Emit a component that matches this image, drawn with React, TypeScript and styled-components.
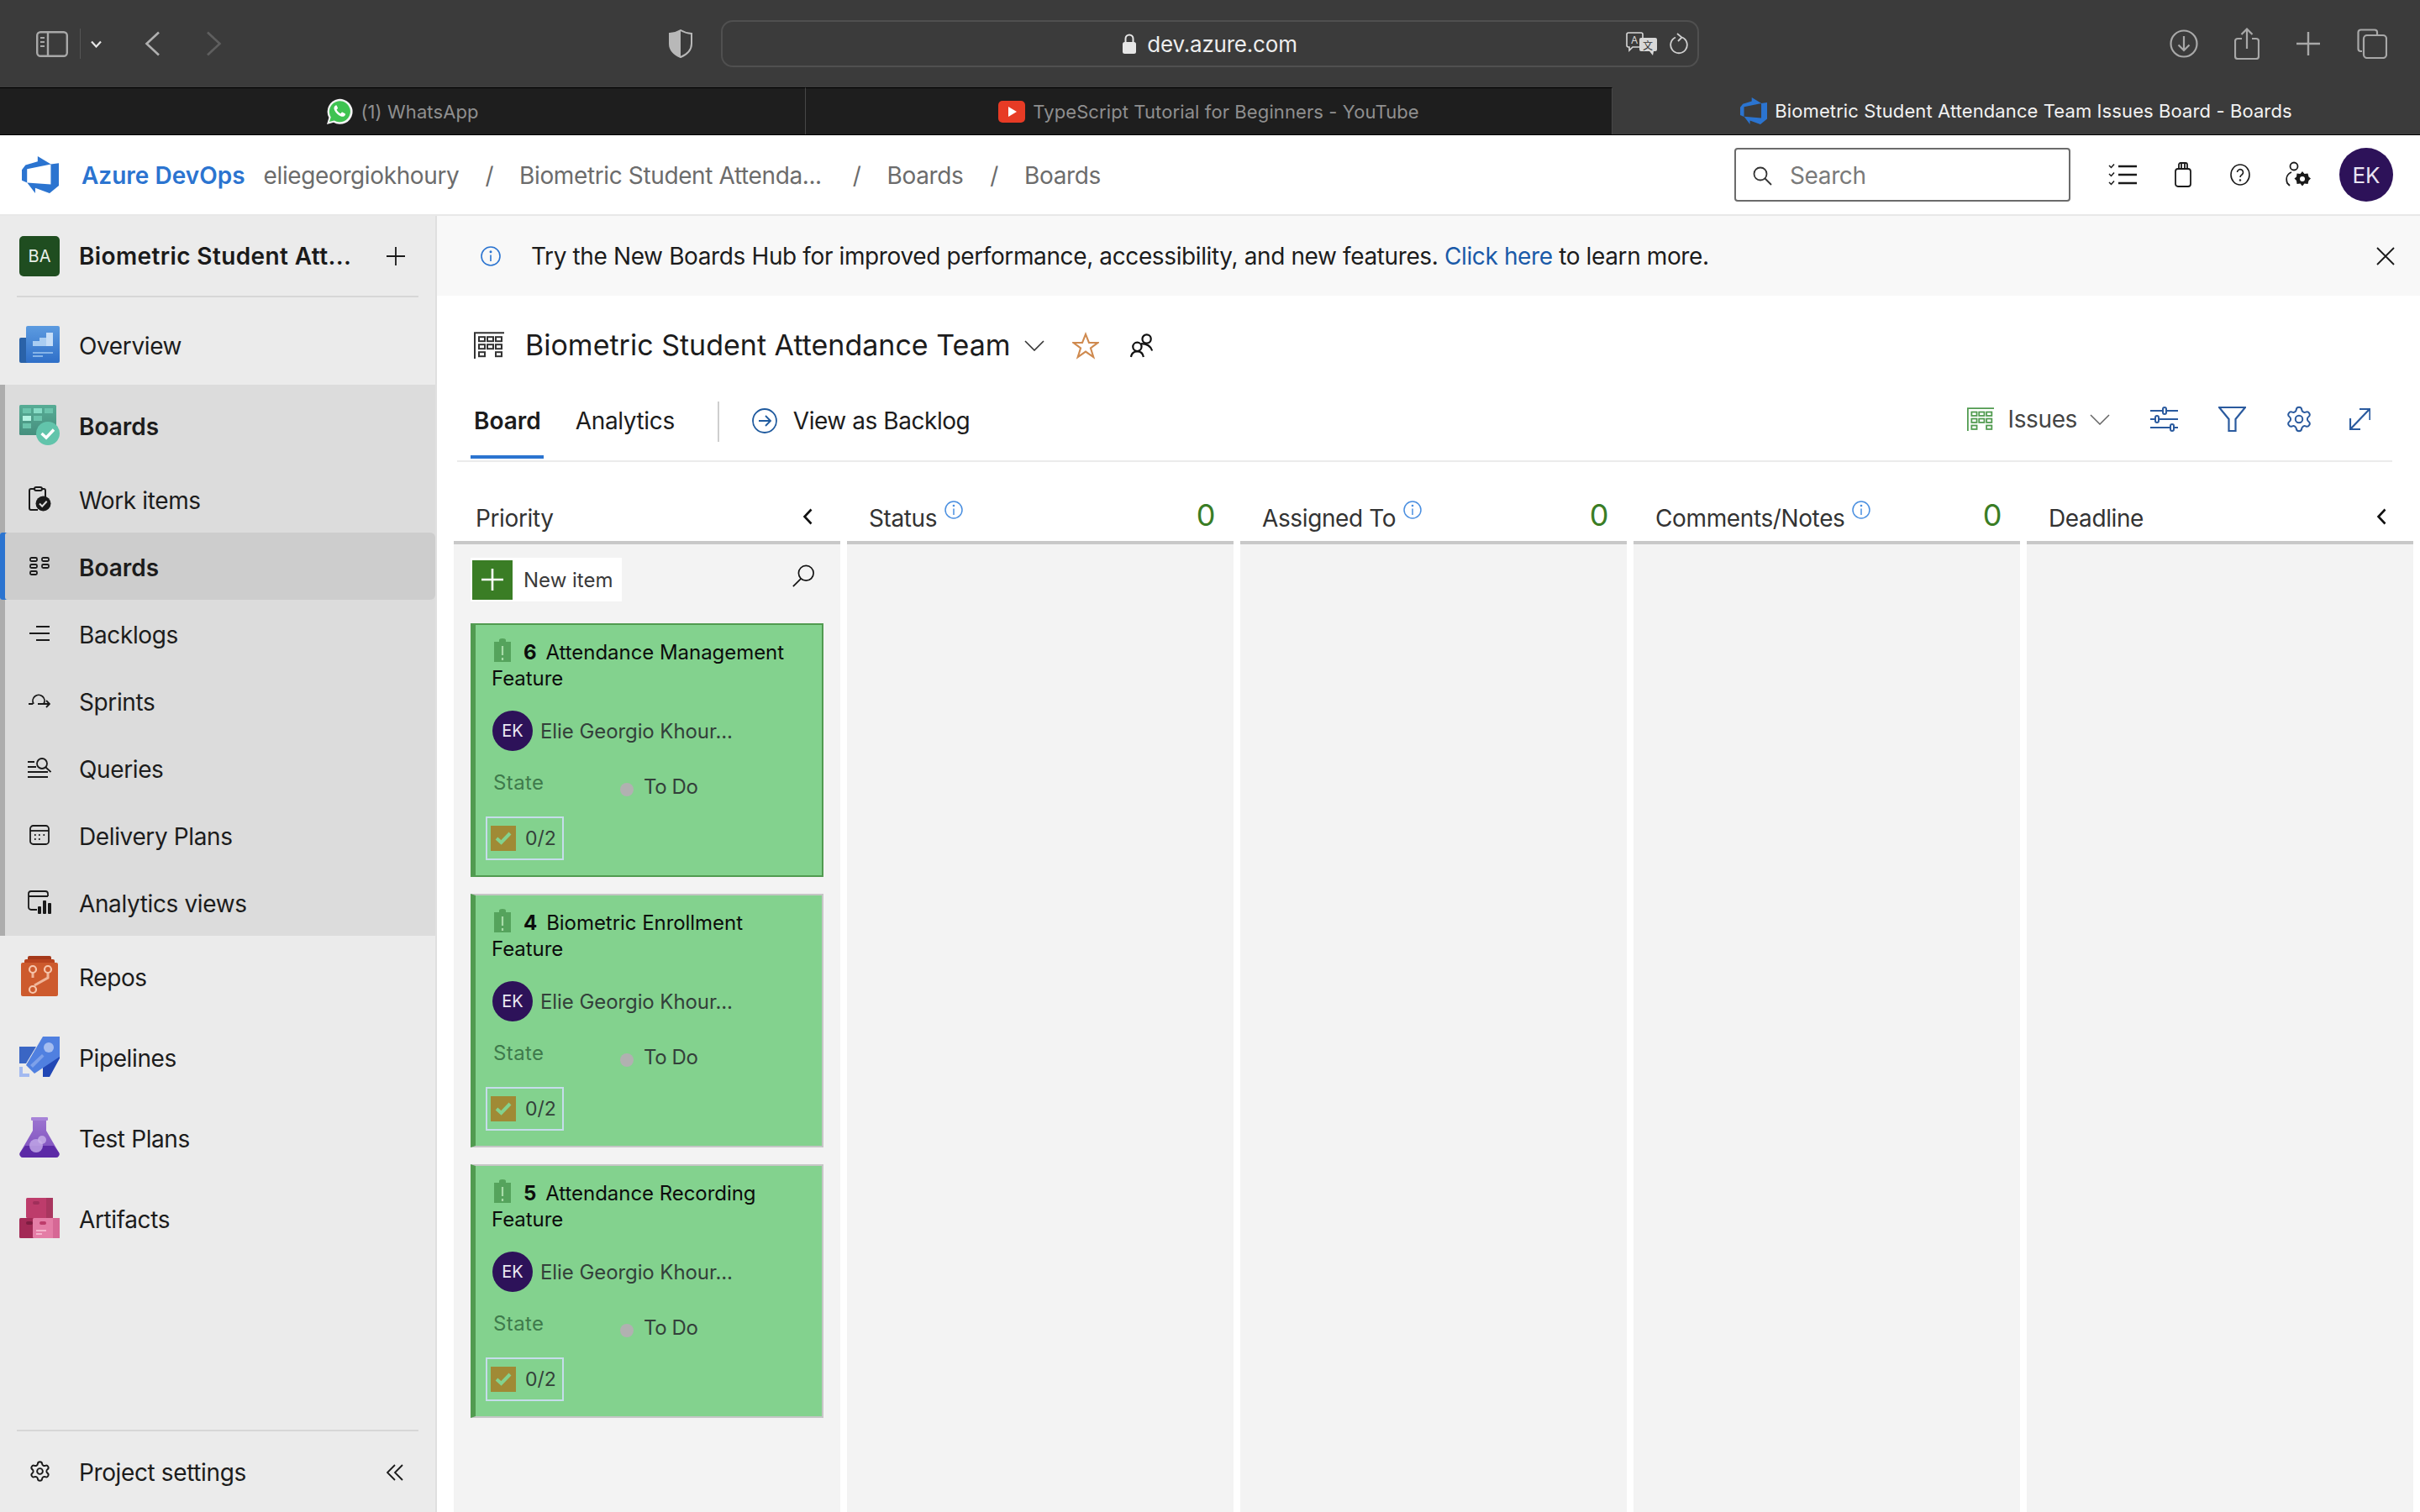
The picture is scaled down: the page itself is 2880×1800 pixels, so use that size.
import React from "react";
import styled, { createGlobalStyle } from "styled-components";
import { Settings } from "lucide-react";

const BLUE = "#2b74d0";
const ICON_BLUE = "#2a5a9e";
const TIGHT = "-0.38px";

const GlobalStyle = createGlobalStyle`
  html, body {
    margin: 0;
    padding: 0;
    background: #fff;
  }
  body {
    font-family: Inter, "Noto Sans", "Liberation Sans", sans-serif;
    color: #1c1c1c;
  }
  * {
    box-sizing: border-box;
  }
`;

const Page = styled.div`
  width: 2880px;
  height: 1800px;
  display: flex;
  flex-direction: column;
  overflow: hidden;
`;

/* ---------- browser chrome ---------- */

const BrowserBar = styled.div`
  height: 104px;
  flex: none;
  background: #3b3b3b;
  display: flex;
  align-items: center;
  padding: 0 39px 0 43px;
`;

const ToolIcon = styled.svg<{ $ml?: number }>`
  flex: none;
  margin-left: ${(p) => p.$ml ?? 0}px;
`;

const ToolDivider = styled.span`
  width: 1px;
  height: 36px;
  flex: none;
  margin-left: 14px;
  background: #555;
`;

const UrlField = styled.div`
  width: 1164px;
  height: 56px;
  margin-left: 34px;
  flex: none;
  border: 2px solid #505050;
  border-radius: 14px;
  display: grid;
  grid-template-columns: 1fr auto 1fr;
  align-items: center;
`;

const UrlText = styled.div`
  grid-column: 2;
  display: flex;
  align-items: center;
  gap: 13px;
  font-size: 26px;
  letter-spacing: -0.2px;
  color: #ededed;
`;

const UrlTools = styled.div`
  grid-column: 3;
  display: flex;
  align-items: center;
  justify-content: flex-end;
  gap: 14px;
  padding-right: 11px;
`;

const BarRight = styled.div`
  margin-left: auto;
  display: flex;
  align-items: center;
`;

const TabStrip = styled.div`
  height: 57px;
  flex: none;
  display: grid;
  grid-template-columns: 959px 960px 961px;
  border-bottom: 1px solid #000;
`;

const BrowserTab = styled.div<{ $active?: boolean }>`
  display: flex;
  align-items: center;
  justify-content: center;
  gap: 9px;
  font-size: 22px;
  letter-spacing: 0.1px;
  background: ${(p) => (p.$active ? "#3b3b3b" : "#1e1e1e")};
  color: ${(p) => (p.$active ? "#f2f2f2" : "#8f8f8f")};
  border-top: ${(p) => (p.$active ? "none" : "1px solid #000")};
  border-right: ${(p) => (p.$active ? "none" : "1px solid #474747")};
`;

/* ---------- azure header ---------- */

const AppHeader = styled.header`
  height: 96px;
  flex: none;
  display: flex;
  align-items: center;
  padding: 0 32px 0 26px;
  background: #fff;
  border-bottom: 2px solid #e8e8e8;
`;

const Brand = styled.span`
  margin-left: 27px;
  padding-top: 2px;
  font-size: 28px;
  font-weight: 600;
  color: ${BLUE};
`;

const Crumb = styled.span<{ $ml: number }>`
  margin-left: ${(p) => p.$ml}px;
  padding-top: 2px;
  font-size: 28px;
  letter-spacing: ${TIGHT};
  color: #6c6c6c;
  white-space: nowrap;
`;

const HeaderRight = styled.div`
  margin-left: auto;
  display: flex;
  align-items: center;
`;

const SearchBox = styled.div`
  width: 400px;
  height: 64px;
  border: 2px solid #6b6b6b;
  border-radius: 4px;
  display: flex;
  align-items: center;
  gap: 21px;
  padding: 2px 0 0 20px;
  font-size: 28px;
  letter-spacing: ${TIGHT};
  color: #7a7a7a;
  margin-right: 45px;
`;

const UserAvatar = styled.div`
  width: 64px;
  height: 64px;
  margin-left: 34px;
  border-radius: 50%;
  background: #2d1259;
  color: #e9e4f2;
  font-size: 26px;
  display: flex;
  align-items: center;
  justify-content: center;
`;

/* ---------- layout ---------- */

const Body = styled.div`
  flex: 1;
  min-height: 0;
  display: flex;
`;

/* ---------- sidebar ---------- */

const Sidebar = styled.aside`
  width: 520px;
  flex: none;
  background: #ebebeb;
  border-right: 2px solid #e0e0e0;
  display: flex;
  flex-direction: column;
`;

const ProjectRow = styled.div`
  height: 95px;
  display: grid;
  grid-template-columns: 94px 1fr auto;
  align-items: center;
  padding-right: 36px;
`;

const ProjectTile = styled.div`
  width: 48px;
  height: 48px;
  margin-left: 23px;
  border-radius: 5px;
  background: #1f4d20;
  color: #e8efe8;
  font-size: 20px;
  display: flex;
  align-items: center;
  justify-content: center;
`;

const ProjectName = styled.div`
  font-size: 28px;
  font-weight: 600;
  letter-spacing: 0.38px;
  color: #1a1a1a;
`;

const SideDivider = styled.div`
  height: 2px;
  margin: 0 20px;
  flex: none;
  background: #d6d6d6;
`;

const NavList = styled.nav`
  margin-top: 8px;
  flex: 1;
`;

const NavGroup = styled.div`
  background: #dcdcdc;
  box-shadow: inset 6px 0 0 #adadad;
`;

const NavRow = styled.div<{ $big?: boolean; $bold?: boolean; $selected?: boolean }>`
  height: ${(p) => (p.$big ? 96 : 80)}px;
  padding-top: 4px;
  display: grid;
  grid-template-columns: 94px 1fr;
  align-items: center;
  font-size: 28px;
  color: #1c1c1c;
  font-weight: ${(p) => (p.$bold ? 600 : 400)};
  letter-spacing: ${(p) => (p.$bold ? "0" : TIGHT)};
  ${(p) =>
    p.$selected
      ? `background: #cdcdcd;
         box-shadow: inset 6px 0 0 ${BLUE};
         border-radius: 3px 6px 6px 3px;`
      : ""}
`;

const NavIcon = styled.span`
  display: flex;
  justify-content: center;
  align-items: center;
  margin-top: -4px;
`;

const SettingsRow = styled.div`
  height: 96px;
  flex: none;
  display: grid;
  grid-template-columns: 94px 1fr auto;
  align-items: center;
  font-size: 28px;
  letter-spacing: ${TIGHT};
  color: #1c1c1c;
  padding: 2px 38px 0 0;
`;

/* ---------- main ---------- */

const Main = styled.main`
  flex: 1;
  min-width: 0;
  display: flex;
  flex-direction: column;
  background: #fff;
`;

const Banner = styled.div`
  height: 95px;
  flex: none;
  background: #f8f8f8;
  display: flex;
  align-items: center;
  padding: 0 30px 0 52px;
  font-size: 28px;
  letter-spacing: ${TIGHT};
  color: #1c1c1c;
`;

const BannerText = styled.span`
  margin-left: 36px;
  flex: 1;
`;

const BannerLink = styled.span`
  color: #1a5aa8;
`;

const TitleRow = styled.div`
  height: 118px;
  flex: none;
  display: flex;
  align-items: center;
  padding-left: 44px;
`;

const TeamName = styled.h1`
  margin: -2px 0 0 25px;
  font-size: 34px;
  font-weight: 400;
  color: #1c1c1c;
`;

const TabsRow = styled.div`
  height: 80px;
  flex: none;
  margin: 0 33px 0 24px;
  border-bottom: 2px solid #ebebeb;
  display: flex;
  align-items: center;
  padding: 0 26px 0 20px;
`;

const PivotTab = styled.div<{ $active?: boolean }>`
  position: relative;
  height: 100%;
  display: flex;
  align-items: center;
  padding-bottom: 16px;
  font-size: 28px;
  font-weight: ${(p) => (p.$active ? 600 : 400)};
  letter-spacing: ${(p) => (p.$active ? "0" : TIGHT)};
  color: #1c1c1c;
  margin-right: ${(p) => (p.$active ? 41 : 0)}px;
  &::after {
    content: "";
    display: ${(p) => (p.$active ? "block" : "none")};
    position: absolute;
    left: -4px;
    right: -3px;
    bottom: 2px;
    height: 4px;
    background: ${BLUE};
  }
`;

const TabsSeparator = styled.span`
  width: 2px;
  height: 48px;
  margin: -14px 0 0 51px;
  background: #cfcfcf;
`;

const BacklogLink = styled.div`
  display: flex;
  align-items: center;
  gap: 19px;
  margin: -16px 0 0 39px;
  font-size: 28px;
  letter-spacing: -0.45px;
  color: #1c1c1c;
`;

const TabsTools = styled.div`
  margin-left: auto;
  margin-top: -20px;
  display: flex;
  align-items: center;
  font-size: 28px;
  letter-spacing: ${TIGHT};
  color: #444;
`;

const IssuesLabel = styled.span`
  margin-left: 17px;
`;

const BoardArea = styled.div`
  flex: 1;
  min-height: 0;
  display: grid;
  grid-template-columns: repeat(5, 460px);
  column-gap: 8px;
  padding-left: 20px;
`;

const Column = styled.section`
  display: flex;
  flex-direction: column;
  min-height: 0;
`;

const ColumnHead = styled.div<{ $pr: number }>`
  height: 98px;
  flex: none;
  display: flex;
  align-items: flex-end;
  padding: 0 ${(p) => p.$pr}px 10px 26px;
  border-bottom: 4px solid #c8c8c8;
  font-size: 28px;
  letter-spacing: ${TIGHT};
  color: #333;
`;

const ColumnTitle = styled.span`
  line-height: 34px;
`;

const InfoMark = styled.svg`
  margin: 0 0 16px 9px;
  flex: none;
`;

const ColumnCount = styled.span`
  margin: 0 0 -1px auto;
  font-size: 36px;
  line-height: 44px;
  color: #3a7d25;
`;

const Collapse = styled.svg`
  margin-left: auto;
  margin-bottom: 9px;
  flex: none;
`;

const ColumnBody = styled.div`
  flex: 1;
  background: #f3f3f3;
  padding: 16px 20px 0;
`;

const ColumnTools = styled.div`
  display: flex;
  align-items: flex-start;
  justify-content: space-between;
  padding-right: 10px;
  margin-bottom: 26px;
`;

const ColumnSearch = styled.svg`
  margin-top: 8px;
  flex: none;
`;

const NewItem = styled.div`
  width: 180px;
  height: 52px;
  background: #fff;
  display: flex;
  align-items: center;
  padding-left: 2px;
  gap: 13px;
  font-size: 24px;
  color: #3a3a3a;
`;

const PlusTile = styled.span`
  width: 48px;
  height: 47px;
  background: #3a7d25;
  display: flex;
  align-items: center;
  justify-content: center;
`;

const CardStack = styled.div`
  display: flex;
  flex-direction: column;
  gap: 20px;
`;

const Card = styled.article<{ $focused?: boolean }>`
  height: 302px;
  background: #83d28e;
  border: 2px solid ${(p) => (p.$focused ? "#519b50" : "#c6c6c6")};
  border-left: 6px solid #519b50;
  padding: 16px 20px 0 12px;
`;

const CardTitle = styled.p`
  margin: 0 0 0 7px;
  font-size: 24px;
  line-height: 31px;
  letter-spacing: -0.05px;
  color: #0c0c0c;
`;

const FeatureMark = styled.svg`
  margin: 0 15px 0 3px;
  vertical-align: -3px;
`;

const CardId = styled.b`
  font-weight: 700;
  margin-right: 11px;
`;

const AssigneeRow = styled.div`
  display: flex;
  align-items: center;
  gap: 9px;
  margin: 23px 0 0 8px;
  font-size: 24px;
  letter-spacing: -0.08px;
  color: #33403a;
`;

const SmallAvatar = styled.span`
  width: 48px;
  height: 48px;
  flex: none;
  border-radius: 50%;
  background: #2d1259;
  color: #ece8f4;
  font-size: 20px;
  display: flex;
  align-items: center;
  justify-content: center;
`;

const StateRow = styled.div`
  display: grid;
  grid-template-columns: 151px 16px auto;
  margin: 23px 0 0 9px;
  font-size: 24px;
  height: 40px;
`;

const StateLabel = styled.span`
  color: #3f7a4c;
  letter-spacing: 0.4px;
  line-height: 30px;
`;

const StateDot = styled.span`
  width: 16px;
  height: 16px;
  margin-top: 15px;
  border-radius: 50%;
  background: #b1b1b1;
`;

const StateValue = styled.span`
  margin-left: 12px;
  line-height: 40px;
  letter-spacing: -0.4px;
  color: #33403a;
`;

const TaskBadge = styled.div`
  width: 93px;
  height: 52px;
  margin-top: 15px;
  border: 2px solid #c5dcea;
  display: flex;
  align-items: center;
  gap: 11px;
  padding-left: 4px;
  font-size: 23px;
  color: #33403a;
`;

const TaskCheck = styled.span`
  width: 30px;
  height: 30px;
  background: #a08a35;
  display: flex;
  align-items: center;
  justify-content: center;
`;

/* ---------- drawings ---------- */

const DevOpsLogo = ({ size }: { size: number }) => (
  <svg width={size} height={size} viewBox="1 1 16 16" preserveAspectRatio="none">
    <path
      fill={BLUE}
      d="M17 4v9.74l-4 3.28-6.2-2.26V17l-3.51-4.59 10.23.8V4.44zm-3.41.49L7.85 1v2.29L2.58 4.84 1 6.87v4.61l2.26 1V6.57z"
    />
  </svg>
);

const BoardGlyph = ({ color, width }: { color: string; width: number }) => (
  <svg width={width} height={width * 0.9} viewBox="0 0 36 32" fill="none" stroke={color} strokeWidth="2">
    <path d="M1 32V1h35" />
    <rect x="6" y="6" width="7" height="5" />
    <rect x="16" y="6" width="7" height="5" />
    <rect x="26" y="6" width="7" height="5" />
    <rect x="6" y="15" width="7" height="5" />
    <rect x="16" y="15" width="7" height="5" />
    <rect x="26" y="15" width="7" height="5" />
    <rect x="6" y="24" width="7" height="5" />
    <rect x="26" y="24" width="7" height="5" />
  </svg>
);

const InfoSmall = () => (
  <InfoMark width="22" height="22" viewBox="0 0 22 22" fill="none" stroke="#4a8fe0" strokeWidth="1.5">
    <circle cx="11" cy="11" r="10" />
    <path d="M11 9.5V17" />
    <circle cx="11" cy="6" r="0.6" fill="#4a8fe0" />
  </InfoMark>
);

const ChevronLeft = () => (
  <Collapse width="12" height="20" viewBox="0 0 12 20" fill="none" stroke="#111" strokeWidth="2.6">
    <path d="M10.5 1.5 2.5 10l8 8.5" />
  </Collapse>
);

const OverviewIcon = () => (
  <svg width="48" height="44" viewBox="0 0 48 44">
    <defs>
      <linearGradient id="ov" x1="0" y1="0" x2="0" y2="1">
        <stop offset="0" stopColor="#5c9be0" />
        <stop offset="1" stopColor="#2f6fc8" />
      </linearGradient>
    </defs>
    <rect x="0" y="14" width="14" height="30" rx="2" fill="#2a62a8" />
    <rect x="8" y="0" width="40" height="44" rx="2" fill="url(#ov)" />
    <path d="M16 24v-6h8v-4h8V8h8v16z" fill="#a9cdf2" />
    <rect x="32" y="8" width="8" height="16" fill="#c6def7" />
    <rect x="16" y="31" width="24" height="2" fill="#86b4e8" />
    <rect x="16" y="35" width="12" height="2" fill="#86b4e8" />
  </svg>
);

const BoardsIcon = () => (
  <svg width="48" height="48" viewBox="0 0 48 48">
    <defs>
      <linearGradient id="bd" x1="0" y1="0" x2="0" y2="1">
        <stop offset="0" stopColor="#57ac95" />
        <stop offset="1" stopColor="#468f7e" />
      </linearGradient>
    </defs>
    <rect width="44" height="36" rx="1.5" fill="url(#bd)" />
    <rect x="4" y="4" width="10" height="6" fill="#6cc4ac" />
    <rect x="17" y="4" width="10" height="6" fill="#88dcc6" />
    <rect x="30" y="4" width="10" height="6" fill="#6cc4ac" />
    <rect x="4" y="13" width="10" height="6" fill="#b4f3e2" />
    <rect x="17" y="13" width="10" height="6" fill="#6cc4ac" />
    <rect x="4" y="22" width="10" height="6" fill="#6cc4ac" />
    <circle cx="34" cy="34" r="14" fill="#62c4ab" />
    <path d="M26.5 34l5.5 5 9-9.5" fill="none" stroke="#fff" strokeWidth="3.4" />
  </svg>
);

const WorkItemsIcon = () => (
  <svg width="28" height="30" viewBox="0 0 28 30" fill="none" stroke="#1a1a1a" strokeWidth="2">
    <path d="M9 3H4a2 2 0 0 0-2 2v21a2 2 0 0 0 2 2h8M16 3h3a2 2 0 0 1 2 2v8" />
    <rect x="8" y="1" width="9" height="4" rx="2" />
    <circle cx="18.5" cy="20.5" r="9" fill="#1a1a1a" stroke="none" />
    <path d="M14 20.5l3.2 3.2 5.5-6" stroke="#dcdcdc" strokeWidth="2" />
  </svg>
);

const SmallBoardsIcon = () => (
  <svg width="24" height="22" viewBox="0 0 24 22" fill="none" stroke="#1a1a1a" strokeWidth="1.8">
    <rect x="1" y="1" width="8" height="4" rx="1.5" />
    <rect x="15" y="1" width="8" height="4" rx="1.5" />
    <rect x="1" y="9" width="8" height="4" rx="1.5" />
    <rect x="15" y="9" width="8" height="4" rx="1.5" />
    <rect x="1" y="17" width="8" height="4" rx="1.5" />
  </svg>
);

const BacklogsIcon = () => (
  <svg width="24" height="18" viewBox="0 0 24 18" fill="none" stroke="#1a1a1a" strokeWidth="1.8">
    <path d="M8 1h16M0 9h24M8 17h16" />
  </svg>
);

const SprintsIcon = () => (
  <svg width="26" height="18" viewBox="0 0 26 18" fill="none" stroke="#1a1a1a" strokeWidth="1.8">
    <path d="M0 13h5M11 13H25M21 9l4 4-4 4" />
    <path d="M6 13a7 7 0 1 1 12 0" />
  </svg>
);

const QueriesIcon = () => (
  <svg width="28" height="24" viewBox="0 0 28 24" fill="none" stroke="#1a1a1a" strokeWidth="1.8">
    <path d="M0 5h8M0 11h10M0 17h24M0 23h24" />
    <circle cx="17" cy="7" r="6" />
    <path d="M21.5 11.5 27.5 17" />
  </svg>
);

const DeliveryIcon = () => (
  <svg width="24" height="24" viewBox="0 0 24 24" fill="none" stroke="#1a1a1a" strokeWidth="1.8">
    <rect x="1" y="1" width="22" height="22" rx="3.5" />
    <path d="M1 7h22" />
    <path d="M6 12h1.6M11 12h1.6M16.5 12h1.6M6 17h1.6M11 17h1.6" strokeWidth="2.2" />
  </svg>
);

const AnalyticsIcon = () => (
  <svg width="28" height="28" viewBox="0 0 28 28" fill="none" stroke="#1a1a1a" strokeWidth="1.8">
    <path d="M11 23H4a3 3 0 0 1-3-3V4a3 3 0 0 1 3-3h17a3 3 0 0 1 3 3v3M1 7h23" />
    <rect x="12" y="19" width="4" height="9" rx="1" fill="#1a1a1a" stroke="none" />
    <rect x="18" y="12" width="4" height="16" rx="1" fill="#1a1a1a" stroke="none" />
    <rect x="24" y="15" width="4" height="13" rx="1" fill="#1a1a1a" stroke="none" />
  </svg>
);

const ReposIcon = () => (
  <svg width="44" height="48" viewBox="0 0 44 48" fill="none">
    <rect x="8" y="0" width="28" height="8" rx="2" fill="#a5391a" />
    <rect x="4" y="4" width="36" height="10" rx="2" fill="#b8441f" />
    <rect x="0" y="8" width="44" height="40" rx="2" fill="#cd5a2d" />
    <g stroke="#f6c6ad" strokeWidth="2.2">
      <circle cx="14" cy="16" r="4" />
      <circle cx="32" cy="16" r="4" />
      <circle cx="14" cy="40" r="4" />
    </g>
    <path d="M14 20v6M32 20v6l-16 9" stroke="#f6c6ad" strokeWidth="3" opacity="0.85" />
  </svg>
);

const PipelinesIcon = () => (
  <svg width="48" height="48" viewBox="0 0 48 48">
    <path d="M0 12h20L8 32H0z" fill="#3a66c4" />
    <path d="M28 48V28l8-8v-2l12 6v2L36 48z" fill="#2147b5" />
    <path d="M48 0v24L18 44 8 34 28 0z" fill="#5080e0" />
    <circle cx="35" cy="13" r="6" fill="#a5bdf0" />
    <path d="M13 34l14-13 2.5 2.5L16 37z" fill="#7ea1ea" />
    <path d="M0 36h4v8h8v4H0z" fill="#a3baf1" />
  </svg>
);

const TestPlansIcon = () => (
  <svg width="48" height="48" viewBox="0 0 48 48">
    <defs>
      <linearGradient id="tp" x1="0" y1="0" x2="0" y2="1">
        <stop offset="0" stopColor="#9a72cf" />
        <stop offset="1" stopColor="#7a4bbc" />
      </linearGradient>
    </defs>
    <rect x="14" y="0" width="20" height="4" rx="1" fill="#a783d8" />
    <path d="M16 4h16v12l15 26a4 4 0 0 1-3.5 6h-39A4 4 0 0 1 1 42l15-26z" fill="url(#tp)" />
    <path d="M7 34h34l6 8a4 4 0 0 1-3.5 6h-39A4 4 0 0 1 1 42z" fill="#5c2aa6" />
    <circle cx="20" cy="34" r="8" fill="#c0a6e6" opacity="0.85" />
    <circle cx="27" cy="27" r="5" fill="#c9b3ea" opacity="0.8" />
  </svg>
);

const ArtifactsIcon = () => (
  <svg width="48" height="48" viewBox="0 0 48 48">
    <rect x="8" y="0" width="32" height="24" rx="1.5" fill="#bd3c6b" />
    <rect x="32" y="0" width="8" height="24" fill="#a9365f" />
    <rect x="16" y="4" width="8" height="4" rx="2" fill="#a02f5a" />
    <rect x="0" y="24" width="20" height="24" rx="1.5" fill="#a32a56" />
    <rect x="8" y="28" width="8" height="4" rx="2" fill="#7d1d40" />
    <rect x="16" y="24" width="32" height="24" rx="1.5" fill="#e47da6" />
    <rect x="40" y="24" width="8" height="24" fill="#d66895" />
    <rect x="24" y="28" width="8" height="4" rx="2" fill="#bd3c6b" />
    <rect x="20" y="38" width="12" height="2" fill="#f5b3cc" />
    <rect x="20" y="42" width="7" height="2" fill="#f5b3cc" />
  </svg>
);

const FeatureGlyph = () => (
  <FeatureMark width="20" height="28" viewBox="0 0 20 28">
    <path d="M0 4h6V2a4 2 0 0 1 8 0v2h6v24H0z" fill="#55a35c" />
    <path d="M10 9v11M10 23v3" stroke="#a9dca9" strokeWidth="2.2" />
  </FeatureMark>
);

const boardsSub = [
  { label: "Work items", icon: <WorkItemsIcon /> },
  { label: "Boards", icon: <SmallBoardsIcon />, selected: true },
  { label: "Backlogs", icon: <BacklogsIcon /> },
  { label: "Sprints", icon: <SprintsIcon /> },
  { label: "Queries", icon: <QueriesIcon /> },
  { label: "Delivery Plans", icon: <DeliveryIcon /> },
  { label: "Analytics views", icon: <AnalyticsIcon /> },
];

const navBottom = [
  { label: "Repos", icon: <ReposIcon /> },
  { label: "Pipelines", icon: <PipelinesIcon /> },
  { label: "Test Plans", icon: <TestPlansIcon /> },
  { label: "Artifacts", icon: <ArtifactsIcon /> },
];

const cards = [
  { id: 6, title: "Attendance Management Feature", focused: true },
  { id: 4, title: "Biometric Enrollment Feature" },
  { id: 5, title: "Attendance Recording Feature" },
];

const emptyColumns = ["Status", "Assigned To", "Comments/Notes"];

const App: React.FC = () => {
  return (
    <Page>
      <GlobalStyle />

      <BrowserBar>
        <ToolIcon width="38" height="31" viewBox="0 0 38 31" fill="none" stroke="#a8a8a8" strokeWidth="2.4">
          <rect x="1.2" y="1.2" width="35.6" height="28.6" rx="4" />
          <path d="M14 1v29" />
          <path d="M5 8h5M5 13h5M5 18h5" strokeWidth="2" />
        </ToolIcon>
        <ToolDivider />
        <ToolIcon $ml={12} width="13" height="9" viewBox="0 0 13 9" fill="none" stroke="#e6e6e6" strokeWidth="2.2">
          <path d="M1 1.5l5.5 6 5.5-6" />
        </ToolIcon>
        <ToolIcon $ml={51} width="19" height="30" viewBox="0 0 19 30" fill="none" stroke="#b0b0b0" strokeWidth="2.6">
          <path d="M17 1.5 2.5 15 17 28.5" />
        </ToolIcon>
        <ToolIcon $ml={54} width="19" height="30" viewBox="0 0 19 30" fill="none" stroke="#5f5f5f" strokeWidth="2.6">
          <path d="M2 1.5 16.5 15 2 28.5" />
        </ToolIcon>
        <ToolIcon $ml={532} width="28" height="34" viewBox="0 0 28 34" fill="none">
          <path d="M14 1c4 2.5 8 3.6 13 4v12c0 8-6 13-13 16C7 30 1 25 1 17V5c5-.4 9-1.5 13-4z" stroke="#b8b8b8" strokeWidth="2" />
          <path d="M14 1C10 3.5 6 4.6 1 5v12c0 8 6 13 13 16z" fill="#b8b8b8" />
        </ToolIcon>
        <UrlField>
          <UrlText>
            <svg width="16" height="24" viewBox="0 0 16 24" fill="none">
              <path d="M3.5 11V6a4.5 4.5 0 0 1 9 0v5" stroke="#e6e6e6" strokeWidth="2" />
              <rect x="0" y="10" width="16" height="14" rx="2.5" fill="#e6e6e6" />
            </svg>
            dev.azure.com
          </UrlText>
          <UrlTools>
            <svg width="38" height="28" viewBox="0 0 38 28">
              <path d="M3 1h15a2 2 0 0 1 2 2v13a2 2 0 0 1-2 2H8l-4 4v-4H3a2 2 0 0 1-2-2V3a2 2 0 0 1 2-2z" fill="#3b3b3b" stroke="#d8d8d8" strokeWidth="1.6" />
              <text x="6" y="14" fontSize="12" fontFamily="Inter, sans-serif" fill="#d8d8d8">A</text>
              <path d="M18 7h17a2 2 0 0 1 2 2v12a2 2 0 0 1-2 2h-2l-1 5-4-5h-10a2 2 0 0 1-2-2V9a2 2 0 0 1 2-2z" fill="#d8d8d8" />
              <text x="20" y="21" fontSize="12" fontFamily="'Noto Sans CJK SC', sans-serif" fill="#333">文</text>
            </svg>
            <svg width="22" height="26" viewBox="0 0 22 26" fill="none" stroke="#cfcfcf" strokeWidth="1.8">
              <path d="M15 5.5A9.8 9.8 0 1 1 7 5.5" />
              <path d="M9 1l5.5 4.5L10 10" />
            </svg>
          </UrlTools>
        </UrlField>
        <BarRight>
          <svg width="34" height="34" viewBox="0 0 34 34" fill="none" stroke="#a8a8a8" strokeWidth="2.2">
            <circle cx="17" cy="17" r="15.5" />
            <path d="M17 8v17M10.5 18.5 17 25l6.5-6.5" />
          </svg>
          <ToolIcon $ml={43} width="30" height="38" viewBox="0 0 30 38" fill="none" stroke="#a8a8a8" strokeWidth="2.2">
            <path d="M9 13H4a3 3 0 0 0-3 3v18a3 3 0 0 0 3 3h22a3 3 0 0 0 3-3V16a3 3 0 0 0-3-3h-5" />
            <path d="M15 25V2M8.5 8 15 1.5 21.5 8" />
          </ToolIcon>
          <ToolIcon $ml={44} width="28" height="28" viewBox="0 0 28 28" fill="none" stroke="#a8a8a8" strokeWidth="2.4">
            <path d="M14 0v28M0 14h28" />
          </ToolIcon>
          <ToolIcon $ml={44} width="36" height="36" viewBox="0 0 36 36" fill="none" stroke="#a8a8a8" strokeWidth="2.2">
            <path d="M6 27H4.5A3 3 0 0 1 1.5 24V4.5a3 3 0 0 1 3-3H21a3 3 0 0 1 3 3V8" />
            <rect x="8" y="8" width="27" height="27" rx="4" />
          </ToolIcon>
        </BarRight>
      </BrowserBar>

      <TabStrip>
        <BrowserTab>
          <svg width="32" height="32" viewBox="0 0 32 32">
            <path d="M1 31l2.4-8A15 15 0 1 1 9 28.8z" fill="#f4f4f4" />
            <path d="M4 28l1.8-5.6A12.5 12.5 0 1 1 9.8 26.4z" fill="#3fc351" />
            <path d="M11.5 8.5c-2 1-2.6 3-1.5 5.5 1.6 3.6 4.4 6.2 7.8 7.5 2.5.8 4.4 0 5.2-2 .3-.8-.1-1.2-.8-1.6l-2.4-1.2c-.6-.3-1-.1-1.4.3l-1 1.2c-2-.8-4-2.8-4.8-4.8l1-.9c.4-.4.5-.8.3-1.3L12.9 9c-.3-.6-.8-.8-1.4-.5z" fill="#fff" />
          </svg>
          (1) WhatsApp
        </BrowserTab>
        <BrowserTab>
          <svg width="32" height="26" viewBox="0 0 32 26">
            <rect width="32" height="26" rx="5" fill="#e73b25" />
            <path d="M12 7v12l10-6z" fill="#fff" />
          </svg>
          TypeScript Tutorial for Beginners - YouTube
        </BrowserTab>
        <BrowserTab $active>
          <DevOpsLogo size={32} />
          Biometric Student Attendance Team Issues Board - Boards
        </BrowserTab>
      </TabStrip>

      <AppHeader>
        <DevOpsLogo size={44} />
        <Brand>Azure DevOps</Brand>
        <Crumb $ml={22}>eliegeorgiokhoury</Crumb>
        <Crumb $ml={31}>/</Crumb>
        <Crumb $ml={31}>Biometric Student Attenda...</Crumb>
        <Crumb $ml={37}>/</Crumb>
        <Crumb $ml={31}>Boards</Crumb>
        <Crumb $ml={32}>/</Crumb>
        <Crumb $ml={31}>Boards</Crumb>
        <HeaderRight>
          <SearchBox>
            <svg width="23" height="23" viewBox="0 0 23 23" fill="none" stroke="#333" strokeWidth="1.8">
              <circle cx="9" cy="9" r="7.5" />
              <path d="M14.5 14.5 22 22" />
            </svg>
            Search
          </SearchBox>
          <svg width="34" height="26" viewBox="0 0 34 26" fill="none" stroke="#1a1a1a">
            <path d="M12 3h22M12 13h22M12 23h22" strokeWidth="2.4" />
            <path d="M1 2l2.5 2.5L7 0.5M1 12l2.5 2.5 3.5-4M1 22l2.5 2.5 3.5-4" strokeWidth="1.5" />
          </svg>
          <ToolIcon $ml={45} width="20" height="30" viewBox="0 0 20 30" fill="none" stroke="#1a1a1a" strokeWidth="1.8">
            <rect x="1" y="8" width="18" height="21" rx="3" />
            <path d="M5 8V3a2 2 0 0 1 2-2h6a2 2 0 0 1 2 2v5M8 2v6M12 2v6" />
          </ToolIcon>
          <ToolIcon $ml={46} width="24" height="26" viewBox="0 0 24 26" fill="none" stroke="#1a1a1a" strokeWidth="1.6">
            <ellipse cx="12" cy="13" rx="11" ry="12" />
            <path d="M8.5 10a3.5 3.5 0 1 1 5.500 3c-1.300.8-2 1.500-2 3" />
            <circle cx="12" cy="19.5" r="0.5" />
          </ToolIcon>
          <ToolIcon $ml={42} width="30" height="32" viewBox="0 0 30 32" fill="none" stroke="#1a1a1a" strokeWidth="1.8">
            <circle cx="10" cy="6" r="4.5" />
            <path d="M7 13c-5 2-7 7-5 13l3 3" />
            <path d="M20 12l2.5 3 4-.5 1 4 2.5 2-2.5 2.5-1 4-4-.5-2.5 3-2.5-3-4 .5-.5-4-2.5-2.5 2.5-2 .5-4 4 .5z" fill="#1a1a1a" stroke="none" />
            <circle cx="20" cy="21" r="3" fill="#fff" stroke="none" />
          </ToolIcon>
          <UserAvatar>EK</UserAvatar>
        </HeaderRight>
      </AppHeader>

      <Body>
        <Sidebar>
          <ProjectRow>
            <ProjectTile>BA</ProjectTile>
            <ProjectName>Biometric Student Att...</ProjectName>
            <svg width="22" height="22" viewBox="0 0 22 22" stroke="#1a1a1a" strokeWidth="1.8">
              <path d="M11 0v22M0 11h22" />
            </svg>
          </ProjectRow>
          <SideDivider />
          <NavList>
            <NavRow $big>
              <NavIcon>
                <OverviewIcon />
              </NavIcon>
              Overview
            </NavRow>
            <NavGroup>
              <NavRow $big $bold>
                <NavIcon>
                  <BoardsIcon />
                </NavIcon>
                Boards
              </NavRow>
              {boardsSub.map((item) => (
                <NavRow key={item.label} $selected={item.selected} $bold={item.selected}>
                  <NavIcon>{item.icon}</NavIcon>
                  {item.label}
                </NavRow>
              ))}
            </NavGroup>
            {navBottom.map((item) => (
              <NavRow key={item.label} $big>
                <NavIcon>{item.icon}</NavIcon>
                {item.label}
              </NavRow>
            ))}
          </NavList>
          <SideDivider />
          <SettingsRow>
            <NavIcon>
              <Settings size={27} strokeWidth={1.7} color="#1a1a1a" />
            </NavIcon>
            Project settings
            <svg width="20" height="20" viewBox="0 0 20 20" fill="none" stroke="#1a1a1a" strokeWidth="1.8">
              <path d="M10 1 1 10l9 9M19 1l-9 9 9 9" />
            </svg>
          </SettingsRow>
        </Sidebar>

        <Main>
          <Banner>
            <svg width="24" height="24" viewBox="0 0 24 24" fill="none" stroke={BLUE} strokeWidth="1.6">
              <circle cx="12" cy="12" r="11" />
              <path d="M12 10.5V18" />
              <circle cx="12" cy="6.8" r="0.7" fill={BLUE} />
            </svg>
            <BannerText>
              Try the New Boards Hub for improved performance, accessibility, and new features.{" "}
              <BannerLink>Click here</BannerLink> to learn more.
            </BannerText>
            <svg width="22" height="22" viewBox="0 0 22 22" stroke="#1a1a1a" strokeWidth="1.8">
              <path d="M1 1l20 20M21 1 1 21" />
            </svg>
          </Banner>

          <TitleRow>
            <BoardGlyph color="#333" width={36} />
            <TeamName>Biometric Student Attendance Team</TeamName>
            <ToolIcon $ml={16} width="24" height="13" viewBox="0 0 24 13" fill="none" stroke="#333" strokeWidth="1.6">
              <path d="M1 1l11 11L23 1" />
            </ToolIcon>
            <ToolIcon $ml={33} width="32" height="33" viewBox="0 0 34 33" fill="none" stroke="#cf8a4f" strokeWidth="2.2">
              <path d="M17 2l4.2 10.7H32.500l-9.2 6.900 3.600 11.400L17 24l-9.900 7 3.600-11.400-9.200-6.900H12.800z" />
            </ToolIcon>
            <ToolIcon $ml={37} width="28" height="30" viewBox="0 0 30 32" fill="none" stroke="#111" strokeWidth="2.4">
              <circle cx="21" cy="8" r="5.5" />
              <path d="M14 14c4.5 0 11.5 1 14 9" />
              <circle cx="9" cy="18" r="5.5" />
              <path d="M1 31c.8-4.8 4-7 8-7s7.2 2.2 8 7" />
            </ToolIcon>
          </TitleRow>

          <TabsRow>
            <PivotTab $active>Board</PivotTab>
            <PivotTab>Analytics</PivotTab>
            <TabsSeparator />
            <BacklogLink>
              <svg width="30" height="30" viewBox="0 0 30 30" fill="none" stroke="#1f5a9e" strokeWidth="1.8">
                <circle cx="15" cy="15" r="14" />
                <path d="M8 15h14M16 9l6 6-6 6" />
              </svg>
              View as Backlog
            </BacklogLink>
            <TabsTools>
              <BoardGlyph color="#519b50" width={32} />
              <IssuesLabel>Issues</IssuesLabel>
              <ToolIcon $ml={15} width="24" height="13" viewBox="0 0 24 13" fill="none" stroke="#666" strokeWidth="1.5">
                <path d="M1 1l11 11L23 1" />
              </ToolIcon>
              <ToolIcon $ml={48} width="33" height="30" viewBox="0 0 33 30" fill="none" stroke={ICON_BLUE} strokeWidth="2">
                <path d="M0 5h33M0 15h33M0 25h33" />
                <rect x="15" y="1" width="4" height="8" rx="2" fill="#fff" />
                <rect x="6" y="11" width="4" height="8" rx="2" fill="#fff" />
                <rect x="24" y="21" width="4" height="8" rx="2" fill="#fff" />
              </ToolIcon>
              <ToolIcon $ml={48} width="33" height="30" viewBox="0 0 33 30" fill="none" stroke={ICON_BLUE} strokeWidth="2.2">
                <path d="M1 1h31L20.5 15v14h-8V15z" />
              </ToolIcon>
              <ToolIcon as={Settings} $ml={46} size={34} strokeWidth={1.4} color={ICON_BLUE} />
              <ToolIcon $ml={43} width="25" height="26" viewBox="0 0 25 26" fill="none" stroke={ICON_BLUE} strokeWidth="2.2">
                <path d="M1 25 24 1M12 1h12.5v13M1 12v13h12" />
              </ToolIcon>
            </TabsTools>
          </TabsRow>

          <BoardArea>
            <Column>
              <ColumnHead $pr={33}>
                <ColumnTitle>Priority</ColumnTitle>
                <ChevronLeft />
              </ColumnHead>
              <ColumnBody>
                <ColumnTools>
                  <NewItem>
                    <PlusTile>
                      <svg width="26" height="26" viewBox="0 0 26 26" stroke="#fff" strokeWidth="2.6">
                        <path d="M13 0v26M0 13h26" />
                      </svg>
                    </PlusTile>
                    New item
                  </NewItem>
                  <ColumnSearch width="28" height="28" viewBox="0 0 28 30" fill="none" stroke="#111" strokeWidth="1.8">
                    <circle cx="17.5" cy="11" r="9.5" />
                    <path d="M11 18 1 28" />
                  </ColumnSearch>
                </ColumnTools>
                <CardStack>
                  {cards.map((card) => (
                    <Card key={card.id} $focused={card.focused}>
                      <CardTitle>
                        <FeatureGlyph />
                        <CardId>{card.id}</CardId>
                        {card.title}
                      </CardTitle>
                      <AssigneeRow>
                        <SmallAvatar>EK</SmallAvatar>
                        Elie Georgio Khour...
                      </AssigneeRow>
                      <StateRow>
                        <StateLabel>State</StateLabel>
                        <StateDot />
                        <StateValue>To Do</StateValue>
                      </StateRow>
                      <TaskBadge>
                        <TaskCheck>
                          <svg width="20" height="16" viewBox="0 0 20 16" fill="none" stroke="#83d28e" strokeWidth="4">
                            <path d="M2 8l5.5 5L18 2" />
                          </svg>
                        </TaskCheck>
                        0/2
                      </TaskBadge>
                    </Card>
                  ))}
                </CardStack>
              </ColumnBody>
            </Column>

            {emptyColumns.map((name) => (
              <Column key={name}>
                <ColumnHead $pr={22}>
                  <ColumnTitle>{name}</ColumnTitle>
                  <InfoSmall />
                  <ColumnCount>0</ColumnCount>
                </ColumnHead>
                <ColumnBody />
              </Column>
            ))}

            <Column>
              <ColumnHead $pr={32}>
                <ColumnTitle>Deadline</ColumnTitle>
                <ChevronLeft />
              </ColumnHead>
              <ColumnBody />
            </Column>
          </BoardArea>
        </Main>
      </Body>
    </Page>
  );
};

export default App;
